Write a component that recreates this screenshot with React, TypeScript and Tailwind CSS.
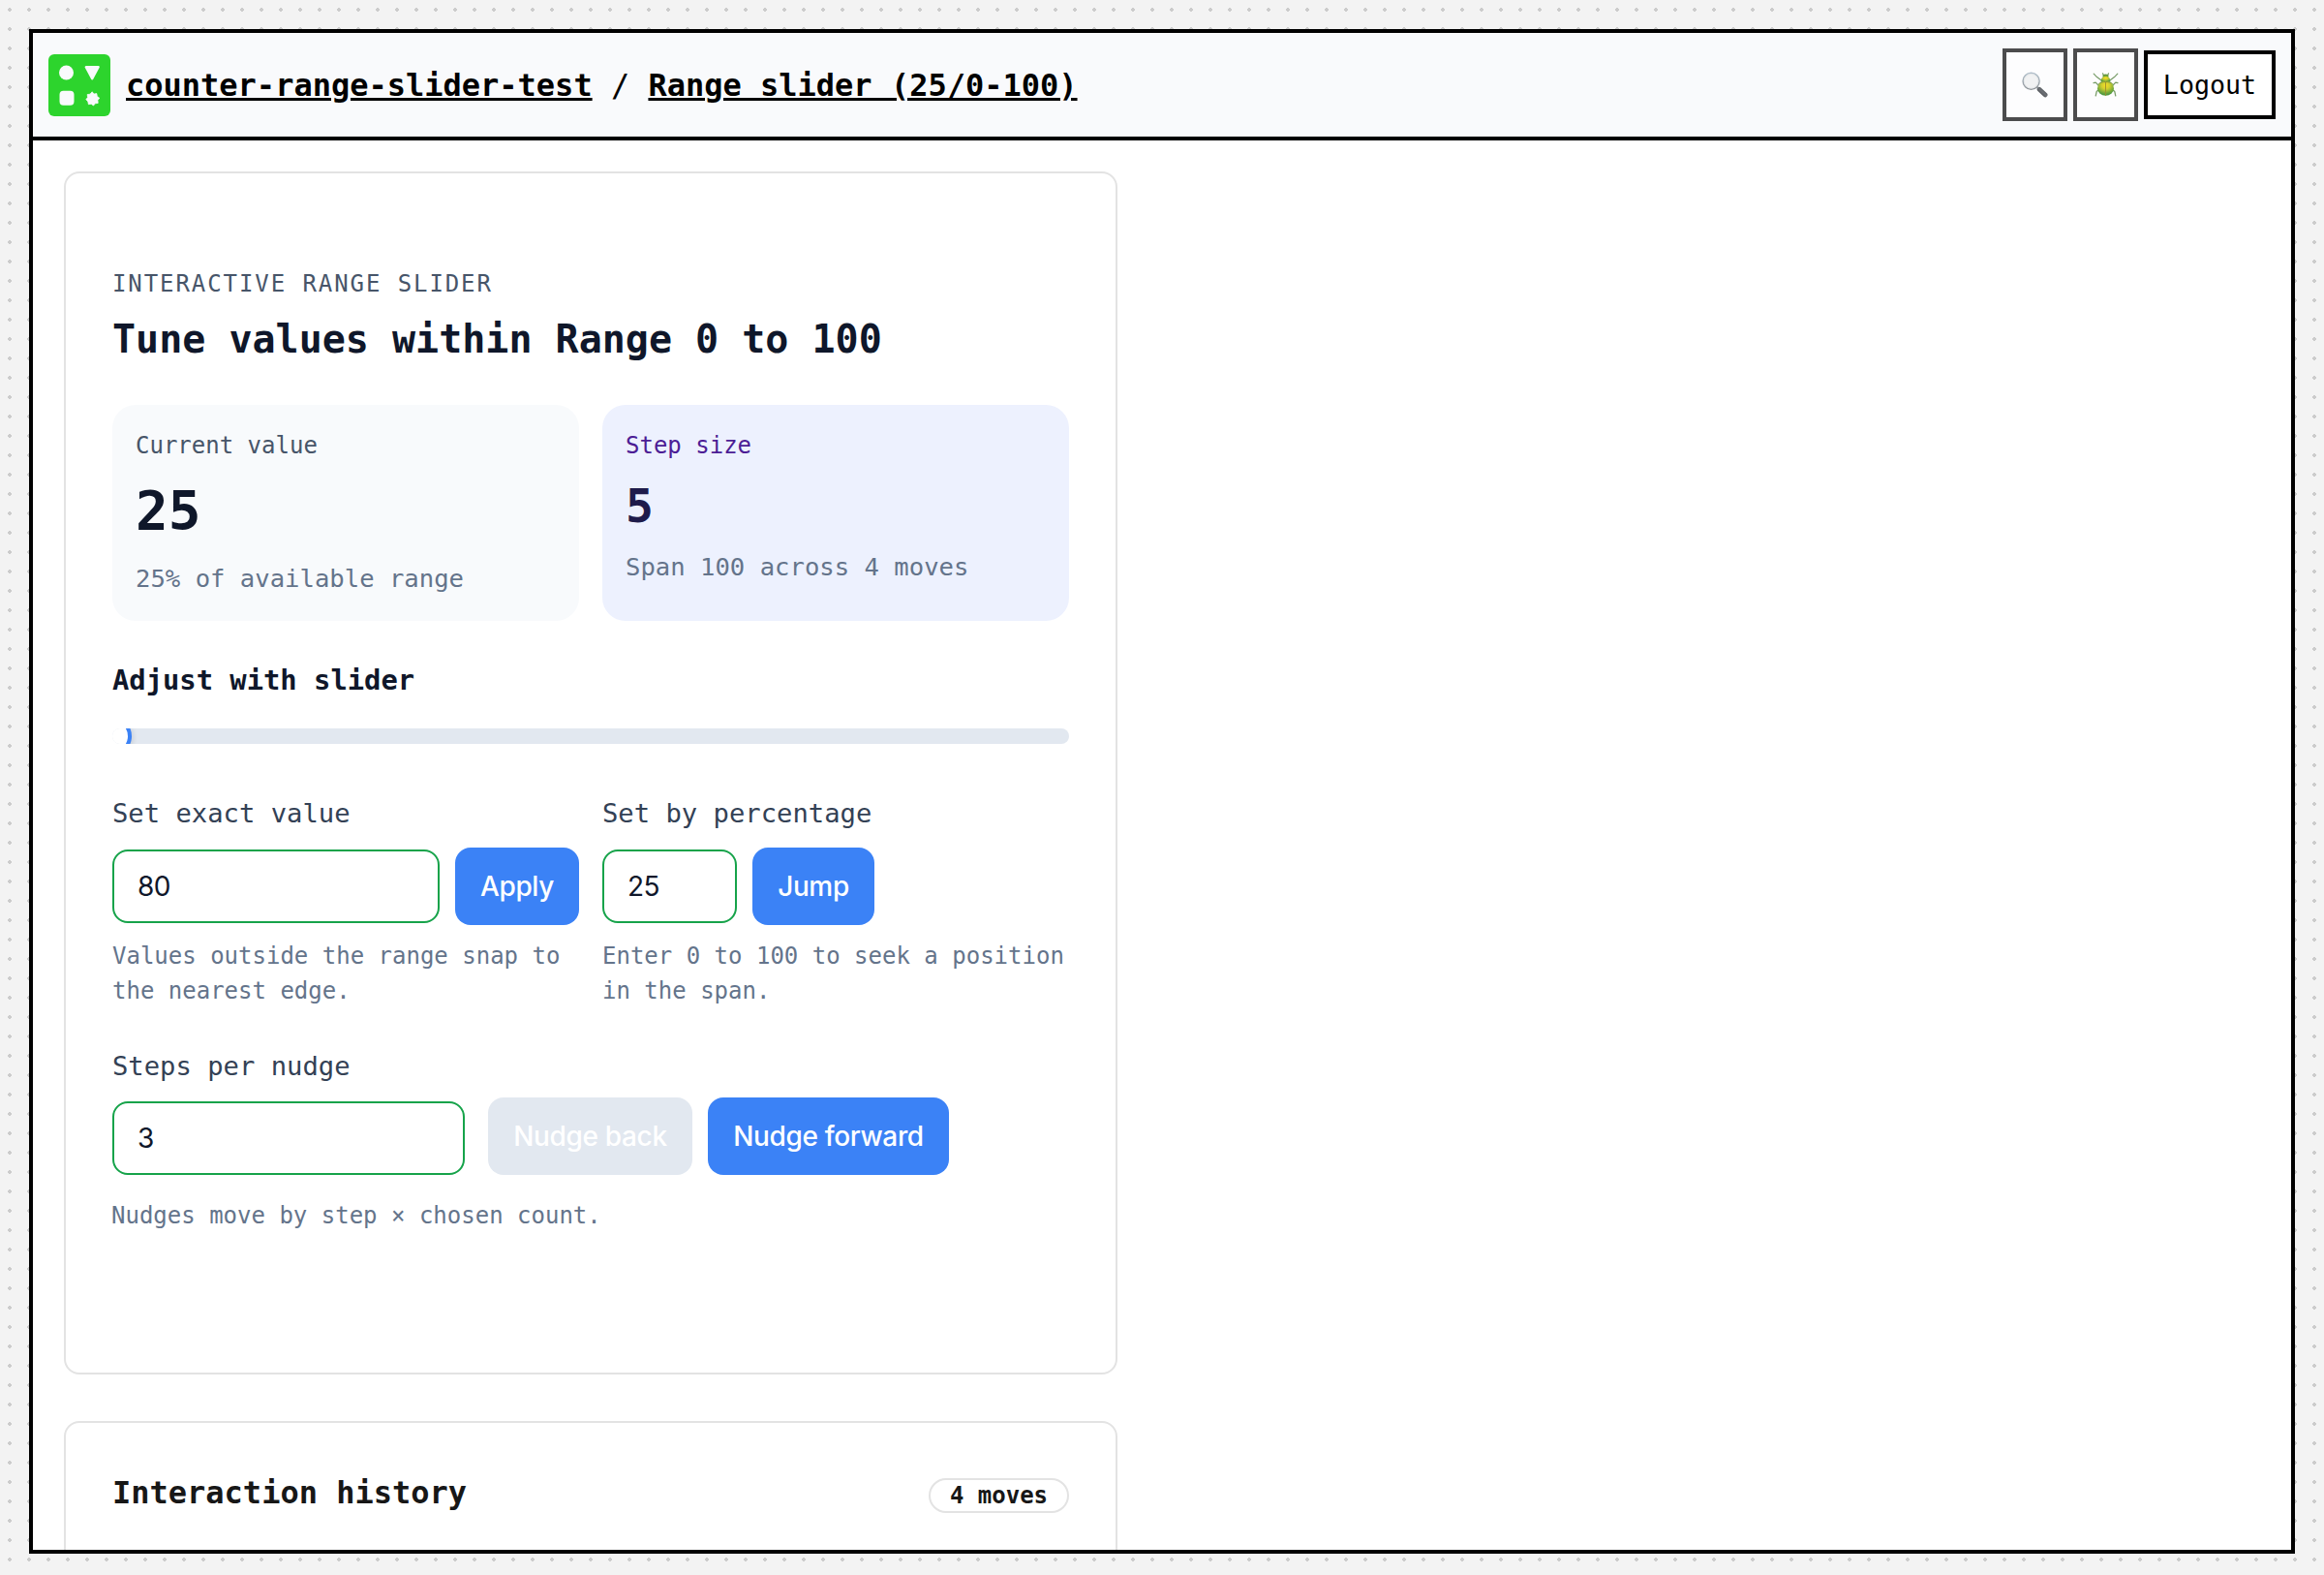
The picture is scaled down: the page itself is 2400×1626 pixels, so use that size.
import React from 'react';

function Logo() {
  return (
    <svg viewBox="0 0 64 64" className="block size-16 shrink-0">
      <rect width="64" height="64" rx="6" fill="#2dd42d" />
      <g fill="#f9fafc" stroke="#f9fafc" strokeLinejoin="round">
        <circle cx="18.5" cy="19" r="7.5" strokeWidth="0" />
        <path d="M38.8 13.2H51.6L45.2 25.2Z" strokeWidth="2.4" />
        <rect x="11.5" y="37.8" width="15" height="15" rx="4" strokeWidth="0" />
        <path
          d="M45.2 38.8l1.7 2.3 2.9-.5.5 2.8 2.4 1.8-1.8 2.3.3 2.9-2.9.4-1.8 2.2-2.3-1.7-2.8.4-.5-2.8-2-2.2 1.7-2.2-.4-2.9 2.8-.4Z"
          strokeWidth="0.8"
        />
      </g>
    </svg>
  );
}

function SearchGlyph() {
  return (
    <svg viewBox="0 0 27 27" className="block size-[27px] opacity-85">
      <defs>
        <linearGradient id="handle" x1="0" y1="1" x2="1" y2="0">
          <stop offset="0" stopColor="#2a2c30" />
          <stop offset="0.55" stopColor="#555a60" />
          <stop offset="1" stopColor="#22252a" />
        </linearGradient>
        <linearGradient id="rim" x1="0" y1="0" x2="0" y2="1">
          <stop offset="0" stopColor="#a4b5c2" />
          <stop offset="1" stopColor="#7d8287" />
        </linearGradient>
      </defs>
      <path d="M15.5 15.8l2.5 2.4" stroke="#8a8f94" strokeWidth="2" />
      <path d="M18 18.2l6.2 5.8" stroke="url(#handle)" strokeWidth="4.6" strokeLinecap="round" />
      <circle cx="9.6" cy="9.8" r="8.5" fill="#f0f1f2" stroke="url(#rim)" strokeWidth="1.5" />
      <circle cx="9.6" cy="9.8" r="7.3" fill="none" stroke="#dcdfe2" strokeWidth="0.8" />
    </svg>
  );
}

function BeetleGlyph() {
  return (
    <svg viewBox="0 0 27 27" className="block size-[27px] opacity-85">
      <defs>
        <radialGradient id="shell" cx="0.5" cy="0.3" r="0.62">
          <stop offset="0" stopColor="#f5d800" />
          <stop offset="0.4" stopColor="#c8c70c" />
          <stop offset="1" stopColor="#358a1f" />
        </radialGradient>
      </defs>
      <g fill="none" stroke="#5f8a4c" strokeWidth="1.2" strokeLinecap="round" strokeLinejoin="round">
        <path d="M8.5 8.5L4.5 5.6 1.2 2.2M18.5 8.5l4-2.9 3.3-3.4" />
        <path d="M6 14L3.2 11.2 1 11.6M21 14l2.8-2.8 2.2.4" />
        <path d="M6.5 18.5L4.2 20.5 3.2 25M20.5 18.5l2.3 2 1 4.5" />
        <path d="M11.5 4L10.5 1.8M15.5 4l1-2.2" />
      </g>
      <ellipse cx="13.5" cy="4.7" rx="3" ry="2.3" fill="#4d8a1c" />
      <path d="M8.6 10.8C8.3 7 10.5 4.8 13.5 4.8S18.7 7 18.4 10.8Z" fill="url(#shell)" />
      <ellipse cx="13.5" cy="17.2" rx="8.5" ry="7.6" fill="url(#shell)" />
      <path d="M6.2 12.6C9 9.9 18 9.9 20.8 12.6" fill="none" stroke="#5c7d12" strokeWidth="0.9" />
      <path d="M13.5 10.6V24.8" stroke="#8c7a0a" strokeWidth="0.9" />
    </svg>
  );
}

function IconButton({ children }: { children: React.ReactNode }) {
  return (
    <button className="flex h-[75px] w-[67px] items-center justify-center border-4 border-[#4c4c4d] bg-[#fdfdfe]">
      {children}
    </button>
  );
}

function NumberField({ value, className }: { value: string; className: string }) {
  return (
    <input
      readOnly
      value={value}
      className={`h-[76px] rounded-2xl border-2 border-[#16a34a] bg-white px-6 font-['Inter',sans-serif] text-[28px] tracking-[-0.5px] text-[#0f172a] outline-none ${className}`}
    />
  );
}

function ActionButton({ label, className }: { label: string; className: string }) {
  return (
    <button
      className={`h-20 shrink-0 rounded-2xl text-center font-['Inter',sans-serif] text-[28px] font-medium tracking-[-0.35px] whitespace-nowrap text-white ${className}`}
    >
      {label}
    </button>
  );
}

function Header() {
  return (
    <header className="flex h-[111px] items-center border-b-4 border-black bg-[#f9fafc] px-4">
      <Logo />
      <h1 className="ml-4 text-[32px] leading-10 whitespace-pre">
        <a className="font-bold underline decoration-[3px]">counter-range-slider-test</a>
        {' / '}
        <a className="font-bold underline decoration-[3px]">Range slider (25/0-100)</a>
      </h1>
      <div className="ml-auto flex items-center gap-1.5">
        <IconButton>
          <SearchGlyph />
        </IconButton>
        <IconButton>
          <BeetleGlyph />
        </IconButton>
        <button className="h-[71px] w-[136px] border-4 border-black bg-white text-[26.667px] leading-[31px]">
          Logout
        </button>
      </div>
    </header>
  );
}

function SliderCard() {
  return (
    <section className="h-[1242px] w-[1088px] rounded-2xl border-2 border-[#e3e3e3] bg-white px-12 pt-24">
      <p className="text-[24px] leading-9 tracking-[0.08em] text-[#475569]">INTERACTIVE RANGE SLIDER</p>
      <h2 className="mt-[15px] text-[40px] leading-[48px] font-bold text-[#0f172a]">
        Tune values within Range 0 to 100
      </h2>

      <div className="mt-11 grid h-[223px] grid-cols-2 gap-6">
        <div className="rounded-3xl bg-[#f8fafc] p-6">
          <p className="text-[24px] leading-9 text-[#475569]">Current value</p>
          <p className="mt-[13px] text-[56px] leading-[72px] font-bold text-[#0f172a]">25</p>
          <p className="mt-3.5 text-[25.6px] leading-10 text-[#64748b]">25% of available range</p>
        </div>
        <div className="rounded-3xl bg-[#edf1fe] p-6">
          <p className="text-[24px] leading-9 text-[#4c1d95]">Step size</p>
          <p className="mt-3.5 text-[48px] leading-[60px] font-bold text-[#1e1b4b]">5</p>
          <p className="mt-[13px] text-[25.6px] leading-10 text-[#64748b]">Span 100 across 4 moves</p>
        </div>
      </div>

      <h3 className="mt-[41px] text-[28.8px] leading-10 font-bold text-[#0f172a]">Adjust with slider</h3>
      <div className="relative mt-[30px] h-4 overflow-hidden rounded-full bg-[#e2e8f0]">
        <div className="absolute -top-3 -left-5 size-10 rounded-full border-4 border-[#3b82f6] bg-white shadow-[0_2px_6px_rgba(15,23,42,0.2)]" />
      </div>

      <div className="mt-[52px] grid grid-cols-2 gap-6">
        <div>
          <p className="text-[27.2px] leading-10 text-[#334155]">Set exact value</p>
          <div className="mt-[15px] flex items-center gap-4">
            <NumberField value="80" className="w-[338px]" />
            <ActionButton label="Apply" className="w-32 bg-[#3b82f6]" />
          </div>
          <p className="mt-3.5 text-[24px] leading-9 text-[#64748b]">
            Values outside the range snap to the nearest edge.
          </p>
        </div>
        <div>
          <p className="text-[27.2px] leading-10 text-[#334155]">Set by percentage</p>
          <div className="mt-[15px] flex items-center gap-4">
            <NumberField value="25" className="w-[139px]" />
            <ActionButton label="Jump" className="w-[126px] bg-[#3b82f6]" />
          </div>
          <p className="mt-3.5 text-[24px] leading-9 text-[#64748b]">
            Enter 0 to 100 to seek a position in the span.
          </p>
        </div>
      </div>

      <p className="mt-10 text-[27.2px] leading-10 text-[#334155]">Steps per nudge</p>
      <div className="mt-3 flex items-end">
        <NumberField value="3" className="w-[364px]" />
        <ActionButton label="Nudge back" className="ml-6 w-[211px] bg-[#e2e8f0]" />
        <ActionButton label="Nudge forward" className="ml-4 w-[249px] bg-[#3b82f6]" />
      </div>
      <p className="mt-6 -ml-px text-[24px] leading-9 text-[#64748b]">Nudges move by step × chosen count.</p>
    </section>
  );
}

function HistoryCard() {
  return (
    <section className="mt-12 h-[400px] w-[1088px] rounded-2xl border-2 border-[#e3e3e3] bg-white px-12 pt-[52px]">
      <div className="flex items-start justify-between">
        <h2 className="text-[32px] leading-10 font-bold text-[#171717]">Interaction history</h2>
        <span className="mt-[5px] flex h-9 w-[145px] items-center justify-center rounded-full border-2 border-[#e3e3e3] text-[24px] leading-8 font-bold text-[#171717]">
          4 moves
        </span>
      </div>
    </section>
  );
}

export default function App() {
  return (
    <div className="h-[1626px] w-[2400px] overflow-hidden bg-[#f3f3f3] bg-[radial-gradient(#cccccc_2px,transparent_2px)] bg-[length:20px_20px] p-[30px] font-['DejaVu_Sans_Mono',monospace] text-black">
      <div className="h-[1574px] w-[2340px] overflow-hidden border-4 border-black bg-white">
        <Header />
        <main className="p-8">
          <SliderCard />
          <HistoryCard />
        </main>
      </div>
    </div>
  );
}
